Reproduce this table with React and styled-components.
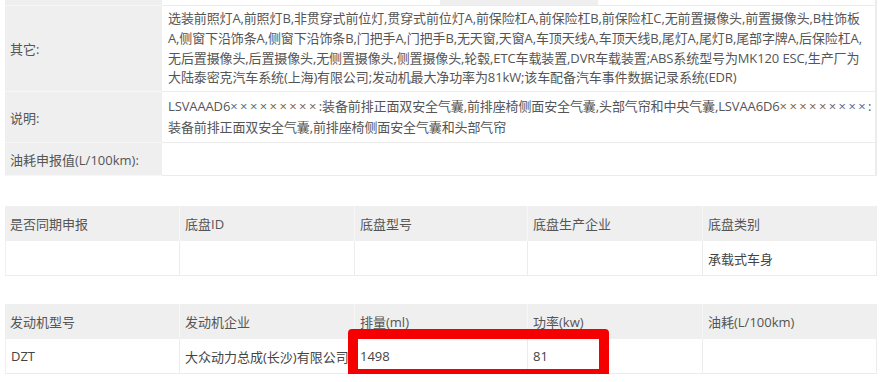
import * as React from "react";
import styled, { createGlobalStyle } from "styled-components";

//
// --- Global ---
const GlobalStyle = createGlobalStyle`
  html, body {
    margin: 0;
    padding: 0;
    background: #fff;
  }
  body {
    font-family: "Open Sans", "Noto Sans CJK SC", sans-serif;
    font-size: 13px;
    color: #555;
  }
`;

//
// --- Styled Components ---
const Page = styled.div`
  width: 872px;
  padding: 0 6px 0 5px;
  font-family: "Open Sans", "Noto Sans CJK SC", sans-serif;
`;

const InfoTable = styled.div`
  display: grid;
  grid-template-columns: 157px 1fr;
  border-right: 2px solid #ececec;
`;

const Label = styled.div`
  background: #efefef;
  display: flex;
  align-items: center;
  padding: 0 5px;
  border-bottom: 1px solid #f7f7f7;
  height: ${props => props.h}px;
  box-sizing: border-box;
  white-space: nowrap;
`;

const Value = styled.div`
  background: #fff;
  padding: ${props => props.pad || 0}px 6px 0;
  border-bottom: 1px solid #ececec;
  white-space: nowrap;
  color: #555;
  letter-spacing: -0.12px;
  height: ${props => props.h}px;
  box-sizing: border-box;
  overflow: hidden;
`;

const Line = styled.div`
  height: ${props => props.lh}px;
  line-height: ${props => props.lh}px;
`;

const Mask = styled.span`
  letter-spacing: 2.4px;
  color: #666;
`;

const TopStub = styled.div`
  height: 6px;
  display: flex;
  padding-left: 272px;
`;

const StubBlock = styled.div`
  width: 158px;
  background: #efefef;
`;

const GridTable = styled.div`
  position: relative;
  display: grid;
  grid-template-columns: 174px 175px 173px 175px 175px;
  margin-top: ${props => props.mt}px;
`;

const HeadCell = styled.div`
  background: #efefef;
  height: 35px;
  display: flex;
  align-items: center;
  padding: 0 5px;
  border-left: ${props => (props.first ? "none" : "1px solid #f7f7f7")};
  white-space: nowrap;
`;

const BodyCell = styled.div`
  background: #fff;
  height: 35px;
  display: flex;
  align-items: center;
  padding: 0 5px;
  border-left: ${props => (props.first ? "1px solid #f0f0f0" : "1px solid #ececec")};
  border-right: ${props => (props.last ? "1px solid #ececec" : "none")};
  border-bottom: 1px solid #ececec;
  box-sizing: border-box;
  white-space: nowrap;
  overflow: hidden;
  color: #444;
`;

const Highlight = styled.div`
  position: absolute;
  left: 343px;
  top: 25px;
  width: 261px;
  height: 50px;
  box-sizing: border-box;
  border: 10px solid #f50000;
  border-radius: 4px;
  pointer-events: none;
`;

//
// --- Data ---
const otherLines = [
  "选装前照灯A,前照灯B,非贯穿式前位灯,贯穿式前位灯A,前保险杠A,前保险杠B,前保险杠C,无前置摄像头,前置摄像头,B柱饰板",
  "A,侧窗下沿饰条A,侧窗下沿饰条B,门把手A,门把手B,无天窗,天窗A,车顶天线A,车顶天线B,尾灯A,尾灯B,尾部字牌A,后保险杠A,",
  "无后置摄像头,后置摄像头,无侧置摄像头,侧置摄像头,轮毂,ETC车载装置,DVR车载装置;ABS系统型号为MK120 ESC,生产厂为",
  "大陆泰密克汽车系统(上海)有限公司;发动机最大净功率为81kW;该车配备汽车事件数据记录系统(EDR)"
];

const MASK = "×××××××××";

const noteLines = [
  <>
    LSVAAAD6<Mask>{MASK}</Mask>:装备前排正面双安全气囊,前排座椅侧面安全气囊,头部气帘和中央气囊,LSVAA6D6
    <Mask>{MASK}</Mask>:
  </>,
  "装备前排正面双安全气囊,前排座椅侧面安全气囊和头部气帘"
];

const chassis = {
  head: ["是否同期申报", "底盘ID", "底盘型号", "底盘生产企业", "底盘类别"],
  row: ["", "", "", "", "承载式车身"]
};

const engine = {
  head: ["发动机型号", "发动机企业", "排量(ml)", "功率(kw)", "油耗(L/100km)"],
  row: ["DZT", "大众动力总成(长沙)有限公司", "1498", "81", ""]
};

const Lines = ({ lines, lh }) =>
  lines.map((line, i) => (
    <Line key={i} lh={lh}>
      {line}
    </Line>
  ));

const SpecTable = ({ data, mt, children }) => (
  <GridTable mt={mt}>
    {data.head.map((h, i) => (
      <HeadCell key={"h" + i} first={i === 0}>
        {h}
      </HeadCell>
    ))}
    {data.row.map((c, i) => (
      <BodyCell key={"c" + i} first={i === 0} last={i === data.row.length - 1}>
        {c}
      </BodyCell>
    ))}
    {children}
  </GridTable>
);

//
// --- App ---
const App = () => (
  <Page>
    <GlobalStyle />
    <InfoTable>
      <Label h={6} />
      <Value h={6}>
        <TopStub>
          <StubBlock />
        </TopStub>
      </Value>
      <Label h={86}>其它:</Label>
      <Value h={86} pad={3}>
        <Lines lines={otherLines} lh={19.8} />
      </Value>
      <Label h={51}>说明:</Label>
      <Value h={51} pad={4}>
        <Lines lines={noteLines} lh={21} />
      </Value>
      <Label h={33}>油耗申报值(L/100km):</Label>
      <Value h={33} />
    </InfoTable>

    <SpecTable data={chassis} mt={30} />

    <SpecTable data={engine} mt={28}>
      <Highlight />
    </SpecTable>
  </Page>
);

export default App;
